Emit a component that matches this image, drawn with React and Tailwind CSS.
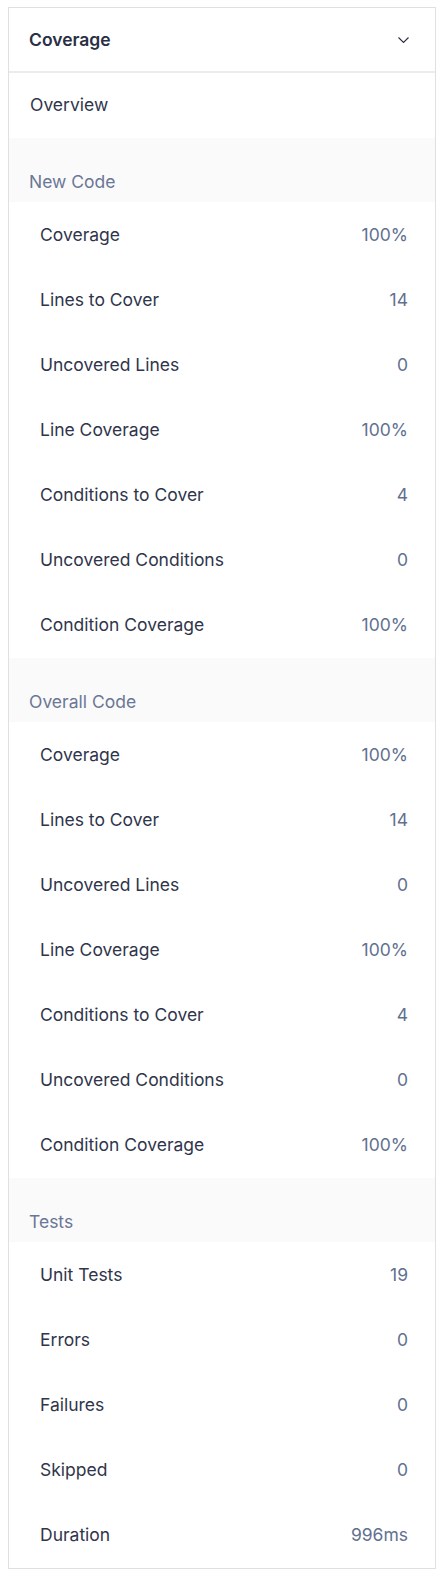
import React from 'react';

const sections = [
  {
    title: 'New Code',
    rows: [
      ['Coverage', '100%'],
      ['Lines to Cover', '14'],
      ['Uncovered Lines', '0'],
      ['Line Coverage', '100%'],
      ['Conditions to Cover', '4'],
      ['Uncovered Conditions', '0'],
      ['Condition Coverage', '100%'],
    ],
  },
  {
    title: 'Overall Code',
    rows: [
      ['Coverage', '100%'],
      ['Lines to Cover', '14'],
      ['Uncovered Lines', '0'],
      ['Line Coverage', '100%'],
      ['Conditions to Cover', '4'],
      ['Uncovered Conditions', '0'],
      ['Condition Coverage', '100%'],
    ],
  },
  {
    title: 'Tests',
    rows: [
      ['Unit Tests', '19'],
      ['Errors', '0'],
      ['Failures', '0'],
      ['Skipped', '0'],
      ['Duration', '996ms'],
    ],
  },
];

export default function App() {
  return (
    <div className="pt-[7px] pl-2 pr-[6px] bg-white font-['Inter','Liberation_Sans',sans-serif]">
      <div className="border border-[#e0e0e0] bg-white">
        <div className="h-[65px] flex items-center justify-between pl-5 pr-[26px] border-b-2 border-[#ececec]">
          <h2 className="text-[17.5px] leading-6 font-semibold text-[#2a2f45]">Coverage</h2>
          <svg width="11" height="6" viewBox="0 0 11 6" fill="none" className="text-[#2a2f45]">
            <path d="M0.5 0.5L5.5 5.5L10.5 0.5" stroke="currentColor" strokeWidth="1.1" />
          </svg>
        </div>
        <div className="h-[65px] flex items-center pl-[21px] text-[17.5px] text-[#30354b]">Overview</div>
        {sections.map((section) => (
          <div key={section.title}>
            <div className="h-16 bg-[#fafafa] pl-5 pt-8 text-[17.5px] leading-6 text-[#6b7796]">
              {section.title}
            </div>
            <div className="pt-px">
              {section.rows.map(([label, value]) => (
                <div key={label} className="h-[65px] flex items-center justify-between pl-[31px] pr-[27px] text-[17.5px]">
                  <span className="text-[#30354b]">{label}</span>
                  <span className="text-[#61708f]">{value}</span>
                </div>
              ))}
            </div>
          </div>
        ))}
      </div>
    </div>
  );
}
